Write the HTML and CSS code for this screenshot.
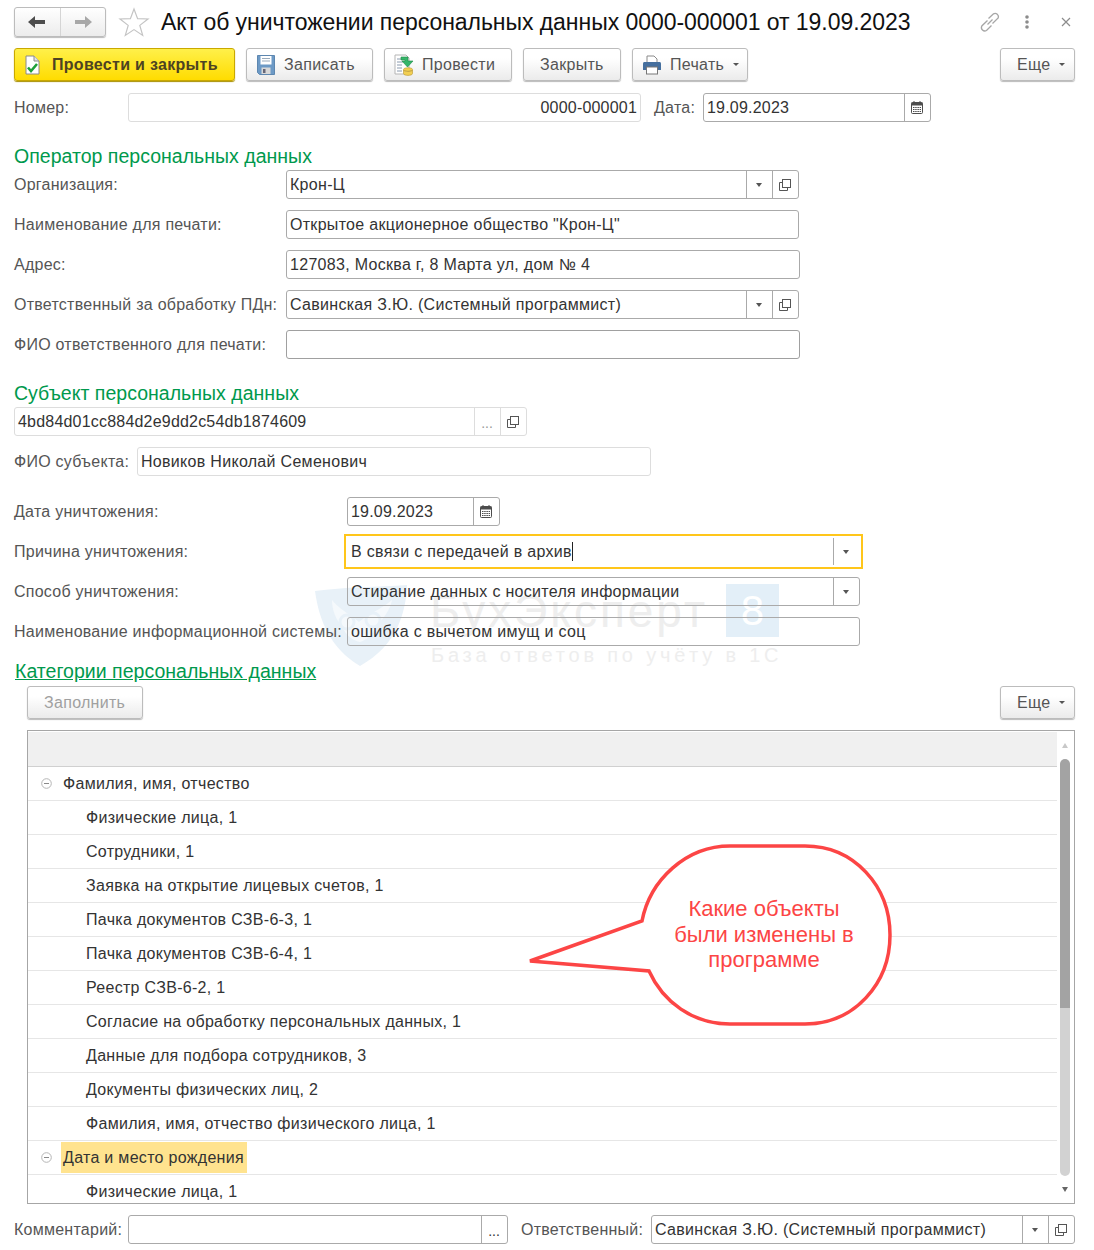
FILE: index.html
```html
<!DOCTYPE html>
<html lang="ru">
<head>
<meta charset="utf-8">
<title>Акт об уничтожении персональных данных</title>
<link rel="stylesheet" href="styles.css">
</head>
<body>
<div class="watermark">
  <svg class="wm-shield" width="94" height="84" viewBox="0 0 94 84">
    <path d="M1 7 C30 3 64 3 93 1 C92 30 82 62 46 82 C16 64 5 36 1 7Z" fill="#e8f1f8"/>
    <path d="M18 16 C26 26 36 30 45 38 C54 30 66 26 78 16 C76 26 70 34 62 42 C58 52 52 56 46 58 C38 56 32 52 28 42 C22 36 18 26 18 16Z" fill="#f5f9fc"/>
    <circle cx="33" cy="38" r="7" fill="none" stroke="#e8f1f8" stroke-width="3"/>
    <circle cx="59" cy="36" r="7" fill="none" stroke="#e8f1f8" stroke-width="3"/>
  </svg>
  <span class="wm-name">БухЭксперт</span>
  <span class="wm-eight">8</span>
  <span class="wm-sub">База ответов по учёту в 1С</span>
</div>

<main class="form">
  <header class="titlebar">
    <div class="nav">
      <span class="nav-btn">
        <svg width="20" height="14" viewBox="0 0 20 14"><path d="M1 7 L8 1 V5 H18 V9 H8 V13Z" fill="#4d4d4d"/></svg>
      </span>
      <span class="nav-btn">
        <svg width="20" height="14" viewBox="0 0 20 14"><path d="M19 7 L12 1 V5 H2 V9 H12 V13Z" fill="#a8a8a8"/></svg>
      </span>
    </div>
    <svg class="star" width="32" height="30" viewBox="0 0 32 30"><path d="M16 2 L19.6 11.6 L30 12 L21.8 18.4 L24.7 28.4 L16 22.6 L7.3 28.4 L10.2 18.4 L2 12 L12.4 11.6Z" fill="#fff" stroke="#c4c4c4" stroke-width="1.2"/></svg>
    <h1 class="title">Акт об уничтожении персональных данных 0000-000001 от 19.09.2023</h1>
    <div class="win-tools">
      <svg class="tool-link" width="22" height="22" viewBox="0 0 22 22" fill="none" stroke="#a6a6a6" stroke-width="1.3"><path d="M8.500 13.500 L13.500 8.500"/><path d="M8.500 9.500 L2.800 15 A3.400 3.400 0 0 0 7.500 19.500 L12.500 14.500"/><path d="M9.500 7.500 L14.500 2.800 A3.400 3.400 0 0 1 19.200 7 L13.500 12.500"/></svg>
      <svg class="tool-menu" width="6" height="14" viewBox="0 0 6 14" fill="#8c8c8c"><circle cx="3" cy="2" r="1.800"/><circle cx="3" cy="7" r="1.800"/><circle cx="3" cy="12" r="1.800"/></svg>
      <svg class="tool-close" width="10" height="10" viewBox="0 0 10 10" stroke="#8c8c8c" stroke-width="1.200"><path d="M1 1 L9 9 M9 1 L1 9"/></svg>
    </div>
  </header>

  <div class="toolbar">
    <button class="btn btn-primary btn-post-close">
      <svg width="15" height="20" viewBox="0 0 15 20"><path d="M1 1 H9 L14 6 V19 H1Z" fill="#fff" stroke="#8a8a8a"/><path d="M9 1 V6 H14" fill="#e4e4e4" stroke="#8a8a8a"/><path d="M3 12.500 L6 16 L12 9" fill="none" stroke="#1d9f3a" stroke-width="2.600"/></svg>
      <span>Провести и закрыть</span>
    </button>
    <button class="btn btn-write">
      <svg width="18" height="20" viewBox="0 0 18 20"><path d="M0.5 0.5 H17.5 V19.5 H2.5 L0.5 17.5Z" fill="#6d9ac6" stroke="#5d87b0"/><rect x="3.5" y="1" width="11" height="8.5" fill="#fff"/><path d="M5 3.5 H13 M5 6 H13" stroke="#9ab" /><rect x="4.5" y="12.5" width="9" height="6.5" fill="#d8d8d8"/><rect x="6" y="14" width="2.5" height="4" fill="#667"/></svg>
      <span>Записать</span>
    </button>
    <button class="btn btn-post">
      <svg width="20" height="22" viewBox="0 0 20 22"><path d="M1 1 H12 L15 4 V20 H1Z" fill="#fff" stroke="#b5b5b5"/><path d="M3 5 H9 M3 8 H9 M3 11 H8 M3 14 H8 M3 17 H8" stroke="#8a9aae"/><path d="M7 3 H14 V7 H19 L13.5 13 L8 7 H11 V6 H7Z" fill="#35b56a" stroke="#208a48" stroke-width=".6"/><ellipse cx="14" cy="15.5" rx="4.5" ry="1.8" fill="#f2cf52" stroke="#b9952b" stroke-width=".6"/><path d="M9.5 16 V19.5 C9.5 22 18.500 22 18.500 19.5 V16 C18.500 18 9.500 18 9.500 16Z" fill="#f2cf52" stroke="#b9952b" stroke-width=".6"/></svg>
      <span>Провести</span>
    </button>
    <button class="btn btn-close"><span>Закрыть</span></button>
    <button class="btn btn-print">
      <svg width="20" height="20" viewBox="0 0 20 20"><path d="M5 1 H12 L15 4 V9 H5Z" fill="#fff" stroke="#8a8a8a"/><path d="M1 9 C1 7 2 7 3 7 H17 C18 7 19 7 19 9 V15 H1Z" fill="#456f9e"/><rect x="4.500" y="12" width="11" height="7" fill="#fff" stroke="#777"/></svg>
      <span>Печать</span><i class="tri tri-btn"></i>
    </button>
    <button class="btn btn-more push-right"><span>Еще</span><i class="tri tri-btn"></i></button>
  </div>

  <div class="row row-number">
    <label class="label w-114">Номер:</label>
    <div class="field field-ro w-513"><span class="value right digits">0000-000001</span></div>
    <label class="label label-date">Дата:</label>
    <div class="field w-228"><span class="value digits">19.09.2023</span>
      <span class="fbtn"><svg width="12" height="13" viewBox="0 0 12 13"><use href="#cal"/></svg></span>
    </div>
  </div>

  <h2 class="section section-op">Оператор персональных данных</h2>
  <div class="row row-first">
    <label class="label w-272">Организация:</label>
    <div class="field w-513"><span class="value">Крон-Ц</span>
      <span class="fbtn"><i class="tri"></i></span>
      <span class="fbtn"><svg width="12" height="12" viewBox="0 0 12 12"><use href="#open"/></svg></span>
    </div>
  </div>
  <div class="row">
    <label class="label w-272">Наименование для печати:</label>
    <div class="field w-513"><span class="value">Открытое акционерное общество "Крон-Ц"</span></div>
  </div>
  <div class="row">
    <label class="label w-272">Адрес:</label>
    <div class="field w-514"><span class="value">127083, Москва г, 8 Марта ул, дом № 4</span></div>
  </div>
  <div class="row">
    <label class="label w-272">Ответственный за обработку ПДн:</label>
    <div class="field w-513"><span class="value">Савинская З.Ю. (Системный программист)</span>
      <span class="fbtn"><i class="tri"></i></span>
      <span class="fbtn"><svg width="12" height="12" viewBox="0 0 12 12"><use href="#open"/></svg></span>
    </div>
  </div>
  <div class="row">
    <label class="label w-272">ФИО ответственного для печати:</label>
    <div class="field field-dark w-514"><span class="value"></span></div>
  </div>

  <h2 class="section section-subj">Субъект персональных данных</h2>
  <div class="row row-first">
    <div class="field field-ro w-513"><span class="value digits">4bd84d01cc884d2e9dd2c54db1874609</span>
      <span class="fbtn fbtn-dots">...</span>
      <span class="fbtn"><svg width="12" height="12" viewBox="0 0 12 12"><use href="#open"/></svg></span>
    </div>
  </div>
  <div class="row">
    <label class="label w-123">ФИО субъекта:</label>
    <div class="field field-ro w-514"><span class="value">Новиков Николай Семенович</span></div>
  </div>

  <div class="row row-gap">
    <label class="label w-333">Дата уничтожения:</label>
    <div class="field w-153"><span class="value digits">19.09.2023</span>
      <span class="fbtn"><svg width="12" height="13" viewBox="0 0 12 13"><use href="#cal"/></svg></span>
    </div>
  </div>
  <div class="row">
    <label class="label w-333">Причина уничтожения:</label>
    <div class="field field-focus w-513"><span class="value">В связи с передачей в архив<i class="caret"></i></span>
      <span class="fbtn"><i class="tri"></i></span>
    </div>
  </div>
  <div class="row">
    <label class="label w-333">Способ уничтожения:</label>
    <div class="field w-513"><span class="value">Стирание данных с носителя информации</span>
      <span class="fbtn"><i class="tri"></i></span>
    </div>
  </div>
  <div class="row">
    <label class="label w-333">Наименование информационной системы:</label>
    <div class="field w-513"><span class="value">ошибка с вычетом имущ и соц</span></div>
  </div>

  <h2 class="section section-cat"><a href="#cat">Категории персональных данных</a></h2>
  <div class="cat-tools">
    <button class="btn btn-fill" disabled><span>Заполнить</span></button>
    <button class="btn btn-more push-right"><span>Еще</span><i class="tri tri-btn"></i></button>
  </div>

  <section class="table" id="cat">
    <div class="tree">
      <div class="tree-head"></div>
      <div class="tr group"><svg width="11" height="11" viewBox="0 0 11 11"><use href="#minus"/></svg><span class="cell">Фамилия, имя, отчество</span></div>
      <div class="tr child">Физические лица, 1</div>
      <div class="tr child">Сотрудники, 1</div>
      <div class="tr child">Заявка на открытие лицевых счетов, 1</div>
      <div class="tr child">Пачка документов СЗВ-6-3, 1</div>
      <div class="tr child">Пачка документов СЗВ-6-4, 1</div>
      <div class="tr child">Реестр СЗВ-6-2, 1</div>
      <div class="tr child">Согласие на обработку персональных данных, 1</div>
      <div class="tr child">Данные для подбора сотрудников, 3</div>
      <div class="tr child">Документы физических лиц, 2</div>
      <div class="tr child">Фамилия, имя, отчество физического лица, 1</div>
      <div class="tr group"><svg width="11" height="11" viewBox="0 0 11 11"><use href="#minus"/></svg><span class="cell cell-hl">Дата и место рождения</span></div>
      <div class="tr child tr-last">Физические лица, 1</div>
    </div>
    <div class="scroll">
      <i class="sc-arrow sc-up"></i>
      <div class="sc-thumb"></div>
      <div class="sc-rest"></div>
      <i class="sc-arrow sc-down"></i>
    </div>
  </section>

  <div class="row row-bottom">
    <label class="label w-114">Комментарий:</label>
    <div class="field w-380"><span class="value"></span><span class="fbtn fbtn-dots fbtn-dark">...</span></div>
    <label class="label label-resp">Ответственный:</label>
    <div class="field w-424"><span class="value">Савинская З.Ю. (Системный программист)</span>
      <span class="fbtn"><i class="tri"></i></span>
      <span class="fbtn"><svg width="12" height="12" viewBox="0 0 12 12"><use href="#open"/></svg></span>
    </div>
  </div>
</main>

<aside class="callout">
  <svg width="368" height="184" viewBox="0 0 368 184">
    <path d="M2 117 L114 77 C122 36 158 2 202 2 H277 C326 2 362 42 362 91 C362 140 326 180 277 180 H202 C165 180 135 158 121 127Z" fill="#fff" stroke="#fc4545" stroke-width="3.500" stroke-linejoin="miter"/>
  </svg>
  <p class="callout-text">Какие объекты<br>были изменены в<br>программе</p>
</aside>

<svg class="defs" width="0" height="0">
  <defs>
    <g id="cal"><rect x=".5" y="1.500" width="11" height="11" rx="1" fill="#fff" stroke="#4d4d4d"/><rect x=".5" y="1.500" width="11" height="3" fill="#4d4d4d"/><path d="M3 0 V3 M9 0 V3" stroke="#4d4d4d"/><path d="M2 6.500 H10 M2 8.500 H10 M2 10.500 H10" stroke="#4d4d4d" stroke-dasharray="1.500 .7"/></g>
    <g id="open" fill="none" stroke="#555"><rect x="3.500" y=".5" width="8" height="8" fill="#fff"/><path d="M3.500 3.500 H.5 V11.500 H8.500 V8.500"/></g>
    <g id="minus"><circle cx="5.500" cy="5.500" r="4.800" fill="#fff" stroke="#b5b5b5"/><path d="M3 5.500 H8" stroke="#8a8a8a"/></g>
  </defs>
</svg>
</body>
</html>
```

FILE: styles.css
```css
* { box-sizing: border-box; }
html, body { margin: 0; padding: 0; }
body {
  position: relative;
  width: 1094px;
  height: 1250px;
  overflow: hidden;
  background: #fff;
  font-family: "Liberation Sans", Arial, sans-serif;
  font-size: 16px;
  letter-spacing: .3px;
  color: #333;
}

/* ---------- page structure ---------- */
.form {
  position: relative;
  padding: 7px 19px 0 14px;
}
.titlebar { display: flex; align-items: center; height: 30px; }
.nav {
  display: flex;
  width: 92px;
  height: 30px;
  border: 1px solid #bcbcbc;
  border-radius: 3px;
  background: linear-gradient(#fff, #ececec);
  box-shadow: 0 1px 1px #bbb;
}
.nav-btn { flex: 1; display: flex; align-items: center; justify-content: center; }
.nav-btn + .nav-btn { border-left: 1px solid #d5d5d5; }
.star { margin-left: 12px; }
.title {
  margin: 0 0 0 11px;
  font-size: 23px;
  font-weight: 400;
  letter-spacing: -.05px;
  color: #111;
  white-space: nowrap;
}
.win-tools { display: flex; align-items: center; margin-left: auto; margin-right: 4px; }
.tool-menu { margin-left: 23px; }
.tool-close { margin-left: 31px; }

/* ---------- buttons ---------- */
.toolbar { display: flex; gap: 11px; margin-top: 11px; height: 33px; }
.btn {
  display: flex;
  align-items: center;
  height: 33px;
  padding: 0;
  border: 1px solid #bcbcbc;
  border-radius: 3px;
  background: linear-gradient(#fff 30%, #ebebeb);
  box-shadow: 0 1px 1px #bbb;
  font: inherit;
  letter-spacing: inherit;
  color: #555;
  white-space: nowrap;
}
.btn-primary {
  border-color: #c9a800;
  background: linear-gradient(#fff04a, #ffdc00);
  box-shadow: 0 1px 1px #a89000;
  font-weight: 700;
  color: #4d4322;
}
.btn-post-close { width: 221px; padding-left: 10px; gap: 12px; }
.btn-write { width: 127px; padding-left: 10px; gap: 9px; }
.btn-post { width: 128px; padding-left: 9px; gap: 8px; }
.btn-close { width: 98px; padding-left: 16px; }
.btn-print { width: 116px; padding-left: 9px; gap: 8px; }
.btn-print .tri-btn { margin-left: 1px; }
.btn-more { width: 75px; padding-left: 16px; }
.btn-fill { width: 116px; padding-left: 16px; color: #a0a0a0; }
.push-right { margin-left: auto; }

.tri {
  display: block;
  width: 0;
  height: 0;
  border-left: 3.5px solid transparent;
  border-right: 3.5px solid transparent;
  border-top: 4px solid #555;
}
.tri-btn { margin-left: 9px; border-left-width: 3px; border-right-width: 3px; border-top-width: 3px; }

/* ---------- form rows ---------- */
.row { display: flex; align-items: center; height: 29px; margin-top: 11px; }
.row-number { margin-top: 12px; }
.row-first { margin-top: 0; }
.row-gap { margin-top: 21px; }
.row-bottom { margin-top: 11px; }

.label { flex: none; color: #555; white-space: nowrap; letter-spacing: .25px; }
.label-date { margin-left: 13px; width: 49px; }
.label-resp { margin-left: 13px; width: 130px; }
.w-114 { width: 114px; }
.w-123 { width: 123px; }
.w-272 { width: 272px; }
.w-333 { width: 333px; }
.w-153 { width: 153px; }
.w-228 { width: 228px; }
.w-380 { width: 380px; }
.w-424 { width: 424px; }
.w-513 { width: 513px; }
.w-514 { width: 514px; }

.field {
  display: flex;
  flex: none;
  height: 29px;
  border: 1px solid #aaa;
  border-radius: 3px;
  line-height: 27px;
  color: #333;
}
.field-ro { border-color: #ddd; }
.field-dark { border-color: #a0a0a0; }
.field-focus { outline: 2px solid #ffc61a; outline-offset: 1px; border-color: #fff; border-radius: 0; }
.value { flex: 1; min-width: 0; padding: 0 3px; white-space: nowrap; overflow: hidden; }
.digits { letter-spacing: .2px; }
.right { text-align: right; }
.caret { display: inline-block; width: 1px; height: 19px; background: #222; vertical-align: -4px; }
.fbtn {
  flex: none;
  display: flex;
  align-items: center;
  justify-content: center;
  width: 26px;
  padding-right: 1px;
  border-left: 1px solid #aaa;
}
.fbtn-dots { align-items: flex-end; color: #999; font-size: 14px; line-height: 24px; letter-spacing: 0; }
.fbtn-dark { color: #333; }
.field-ro .fbtn { border-color: #ddd; }

/* ---------- section headings ---------- */
.section { margin: 0; font-size: 19.500px; font-weight: 400; line-height: 24px; letter-spacing: .02px; color: #00994d; }
.section a { color: inherit; text-decoration: underline; }
.section-op { margin-top: 22px; margin-bottom: 2px; }
.section-subj { margin-top: 22px; margin-bottom: 2px; }
.section-cat { margin-top: 13px; margin-bottom: -1px; padding-left: 1px; }
.cat-tools { display: flex; height: 33px; margin-top: 4px; padding-left: 13px; }

/* ---------- tree table ---------- */
.table {
  display: flex;
  height: 474px;
  margin: 11px 0 0 13px;
  padding-top: 1px;
  border: 1px solid #a6a6a6;
  overflow: hidden;
}
.tree { width: 1029px; flex: none; }
.tree-head { height: 35px; background: #f0f0f0; border-bottom: 1px solid #d0d0d0; }
.tr {
  display: flex;
  align-items: center;
  height: 34px;
  border-bottom: 1px solid #e6e6e6;
  color: #333;
  white-space: nowrap;
}
.child { padding-left: 58px; }
.group { padding-left: 13px; }
.cell { margin-left: 9px; padding: 0 3px 0 2px; line-height: 31px; }
.cell-hl { background: #ffe38f; }
.tr-last { border-bottom: 0; height: 29px; padding-top: 4px; }

.scroll { position: relative; flex: 1; }
.sc-thumb {
  position: absolute;
  top: 27px;
  left: 3px;
  width: 10px;
  height: 249px;
  background: #a3a3a3;
  border-radius: 5px 5px 0 0;
}
.sc-rest {
  position: absolute;
  top: 276px;
  left: 3px;
  width: 10px;
  height: 168px;
  background: #d2d2d2;
  border-radius: 0 0 5px 5px;
}
.sc-arrow { position: absolute; left: 5px; width: 0; height: 0; border-left: 3px solid transparent; border-right: 3px solid transparent; }
.sc-up { top: 11px; border-bottom: 5px solid #c8c8c8; }
.sc-down { top: 455px; border-top: 5px solid #666; }

/* ---------- overlays ---------- */
.watermark { position: absolute; left: 0; top: 0; width: 1094px; height: 700px; }
.wm-shield { position: absolute; left: 314px; top: 584px; }
.wm-name { position: absolute; left: 430px; top: 587px; font-size: 46px; line-height: 48px; letter-spacing: 3px; color: #eeeeee; }
.wm-eight {
  position: absolute;
  left: 726px;
  top: 584px;
  width: 53px;
  height: 53px;
  background: #e3eff8;
  color: #fff;
  font-size: 42px;
  line-height: 53px;
  text-align: center;
}
.wm-sub { position: absolute; left: 431px; top: 643px; font-size: 20px; line-height: 24px; letter-spacing: 3.800px; color: #eeeeee; white-space: nowrap; }

.callout { position: absolute; left: 528px; top: 844px; width: 368px; height: 184px; }
.callout svg { display: block; }
.callout-text {
  position: absolute;
  left: 120px;
  top: 52px;
  width: 232px;
  margin: 0;
  font-size: 22px;
  line-height: 25.500px;
  letter-spacing: 0;
  text-align: center;
  color: #fc4545;
}
.defs { position: absolute; }
```
